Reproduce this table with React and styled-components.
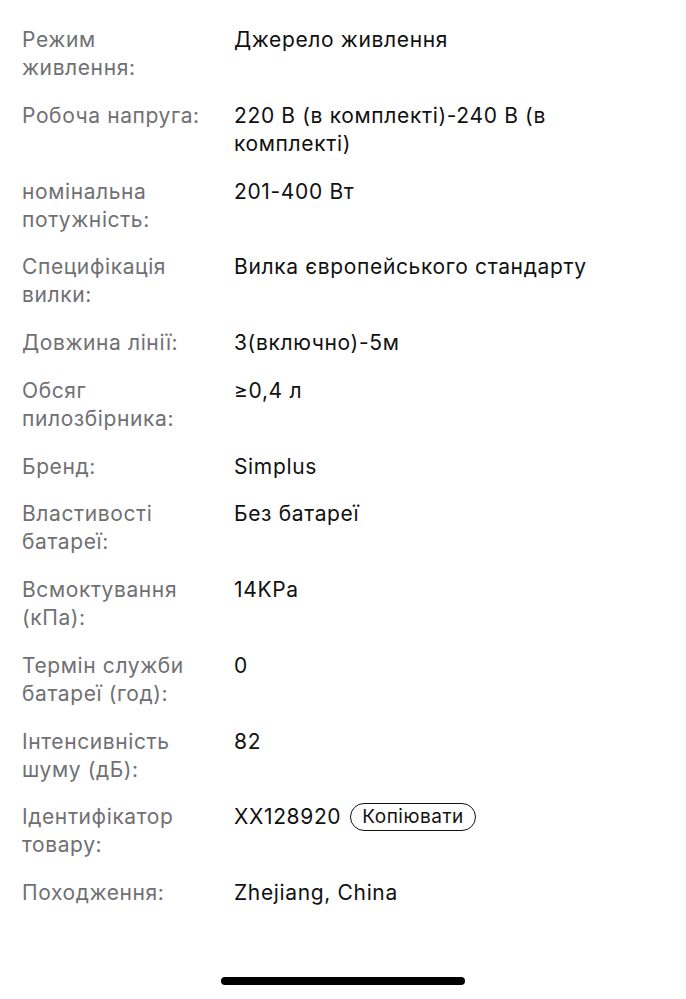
import styled, { createGlobalStyle } from "styled-components";

const GlobalStyle = createGlobalStyle`
    html, body {
        margin: 0;
        padding: 0;
        background: #ffffff;
    }
    body {
        font-family: Inter, "Noto Sans", sans-serif;
        -webkit-font-smoothing: antialiased;
    }
`
const Page = styled.div`
    width: 686px;
    min-height: 999px;
    box-sizing: border-box;
    display: flex;
    flex-direction: column;
    padding: 26px 22px 14px 22px;
`
const SpecList = styled.div`
    display: grid;
    grid-template-columns: 212px 410px;
    row-gap: 19.75px;
    align-items: start;
`
const Label = styled.div`
    font-size: 21px;
    letter-spacing: 0.6px;
    line-height: 28px;
    color: #707074;
    padding-right: 22px;
`
const Value = styled.div`
    font-size: 21px;
    letter-spacing: 0.65px;
    line-height: 28px;
    color: #111111;
    display: flex;
    align-items: center;
    flex-wrap: wrap;
    gap: 9px;
`
const CopyButton = styled.button`
    font-family: inherit;
    font-size: 19px;
    letter-spacing: 0.5px;
    line-height: 24px;
    color: #111111;
    background: #ffffff;
    border: 1.5px solid #111111;
    border-radius: 14px;
    padding: 1px 11px;
    cursor: pointer;
`
const HomeIndicator = styled.div`
    margin: auto auto 0 auto;
    width: 244px;
    height: 8px;
    border-radius: 4px;
    background: #000000;
`

const specs = [
    ["Режим живлення:", "Джерело живлення"],
    ["Робоча напруга:", "220 В (в комплекті)-240 В (в комплекті)"],
    ["номінальна потужність:", "201-400 Вт"],
    ["Специфікація вилки:", "Вилка європейського стандарту"],
    ["Довжина лінії:", "3(включно)-5м"],
    ["Обсяг пилозбірника:", "≥0,4 л"],
    ["Бренд:", "Simplus"],
    ["Властивості батареї:", "Без батареї"],
    ["Всмоктування (кПа):", "14KPa"],
    ["Термін служби батареї (год):", "0"],
    ["Інтенсивність шуму (дБ):", "82"],
    ["Ідентифікатор товару:", "XX128920", true],
    ["Походження:", "Zhejiang, China"],
];

export default function App() {
    return (
        <>
            <GlobalStyle />
            <Page>
                <SpecList>
                    {specs.map(([label, value, copy]) => [
                        <Label key={label}>{label}</Label>,
                        <Value key={label + "v"}>
                            {copy ? <span>{value}</span> : value}
                            {copy && <CopyButton>Копіювати</CopyButton>}
                        </Value>,
                    ])}
                </SpecList>
                <HomeIndicator />
            </Page>
        </>
    );
}
